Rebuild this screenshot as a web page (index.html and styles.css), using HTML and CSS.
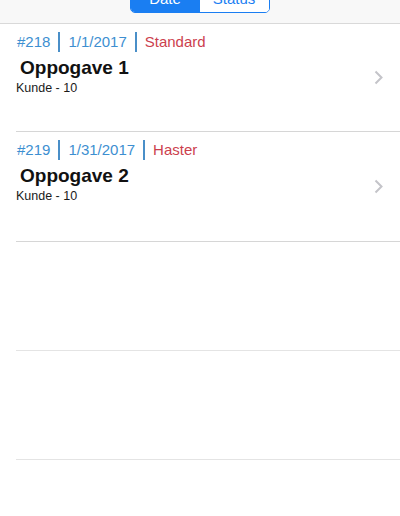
FILE: index.html
```html
<!DOCTYPE html>
<html>
<head>
<meta charset="utf-8">
<link rel="stylesheet" href="styles.css">
</head>
<body>
<div class="header">
  <div class="segmented">
    <div class="seg seg-on">Date</div>
    <div class="seg">Status</div>
  </div>
</div>
<ul class="list">
  <li class="row">
    <div class="content">
      <div class="meta"><span class="m">#218</span><span class="m">1/1/2017</span><span class="m prio">Standard</span></div>
      <div class="title">Oppogave 1</div>
      <div class="sub">Kunde - 10</div>
    </div>
    <svg class="chev" width="9" height="15" viewBox="0 0 9 15"><path d="M1.5 1.5 L7.5 7.5 L1.5 13.5" fill="none" stroke="#c4c4c9" stroke-width="2"/></svg>
  </li>
  <li class="row">
    <div class="content">
      <div class="meta"><span class="m">#219</span><span class="m">1/31/2017</span><span class="m prio">Haster</span></div>
      <div class="title">Oppogave 2</div>
      <div class="sub">Kunde - 10</div>
    </div>
    <svg class="chev" width="9" height="15" viewBox="0 0 9 15"><path d="M1.5 1.5 L7.5 7.5 L1.5 13.5" fill="none" stroke="#c4c4c9" stroke-width="2"/></svg>
  </li>
  <li class="row empty"></li>
  <li class="row empty"></li>
</ul>
</body>
</html>
```
FILE: styles.css
```css
* { box-sizing: border-box; }
html, body { margin: 0; padding: 0; }
body {
  width: 400px;
  height: 516px;
  overflow: hidden;
  background: #ffffff;
  font-family: "Liberation Sans", Arial, sans-serif;
}
.header {
  height: 24px;
  background: #f8f8f8;
  border-bottom: 1px solid #d9d9d9;
  display: flex;
  justify-content: center;
  overflow: hidden;
}
.segmented {
  display: flex;
  margin-top: -16px;
  height: 29px;
  width: 140px;
  border: 1px solid #1a7ef2;
  border-radius: 5px;
  overflow: hidden;
  margin-left: -1px;
}
.seg {
  flex: 1;
  display: flex;
  align-items: center;
  justify-content: center;
  font-size: 15px;
  color: #1a7ef2;
  background: #fff;
}
.seg-on {
  background: #1a7ef2;
  color: #fff;
}
.list {
  list-style: none;
  margin: 0;
  padding: 0 0 0 16px;
}
.row {
  height: 109px;
  border-bottom: 1px solid #d6d6d6;
  display: flex;
  align-items: center;
  padding-right: 17px;
}
.row:nth-child(1) { height: 108px; }
.row:nth-child(2) { height: 110px; }
.row.empty { border-bottom-color: #e4e4e4; }
.content {
  flex: 1;
  align-self: flex-start;
  padding-top: 8px;
}
.meta {
  display: flex;
  font-size: 15px;
  line-height: 20px;
  color: #3d8fd1;
  margin-left: 1px;
}
.m { padding: 0 8px; border-left: 2px solid #4a8fc8; }
.m:first-child { padding-left: 0; border-left: none; }
.prio { color: #cc3f4e; }
.title {
  margin-top: 5px;
  margin-left: 4px;
  font-size: 19px;
  font-weight: bold;
  line-height: 22px;
  color: #111;
}
.sub {
  margin-top: 2px;
  font-size: 12.5px;
  line-height: 15px;
  color: #1a1a1a;
}
.chev { display: block; }
```
